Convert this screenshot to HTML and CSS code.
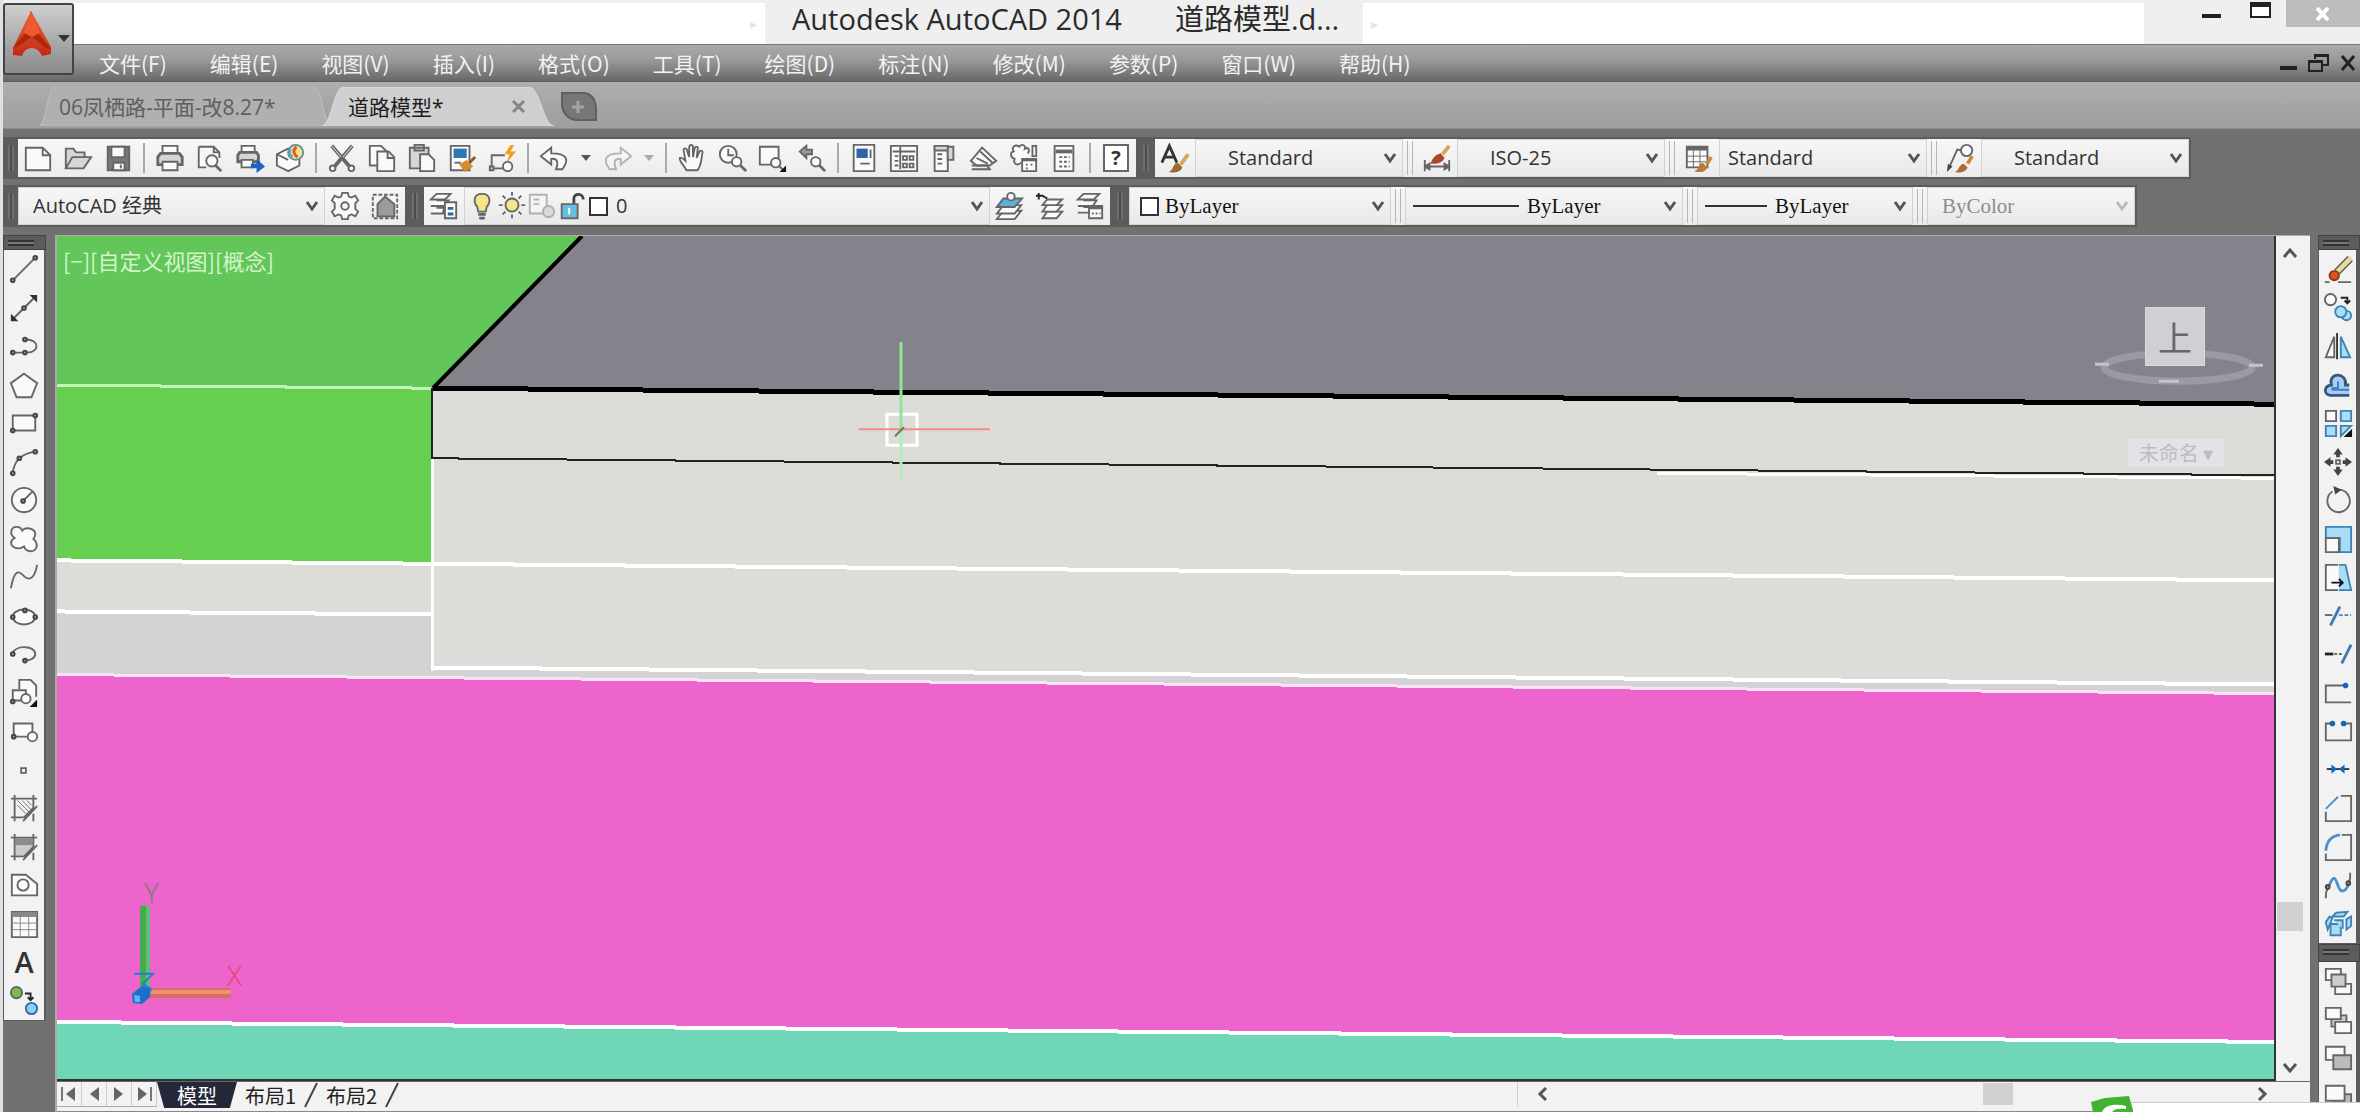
FILE: index.html
```html
<!DOCTYPE html>
<html lang="zh-CN">
<head>
<meta charset="utf-8">
<title>Autodesk AutoCAD 2014 道路模型.dwg</title>
<link rel="stylesheet" href="styles.css">
</head>
<body>
<div class="app">
  <header class="titlebar">
    <div class="title-pane"><span class="pane-arrow">▸</span></div>
    <h1 class="title"><span>Autodesk AutoCAD 2014</span><span>道路模型.d...</span></h1>
    <div class="title-pane"><span class="pane-arrow start">▸</span></div>
    <div class="window-buttons">
      <button type="button" aria-label="最小化"><svg width="20" height="20"><path d="M0 14h19v4H0z" fill="#222"/></svg></button>
      <button type="button" aria-label="最大化"><svg width="22" height="20"><path d="M1 4v13h19V4z" fill="#fff" stroke="#222" stroke-width="2"/><path d="M0 2h21v5H0z" fill="#222"/></svg></button>
      <button type="button" class="close" aria-label="关闭"><svg width="18" height="14"><path d="M3 1l11 12M14 1L3 13" stroke="#fff" stroke-width="4"/></svg></button>
    </div>
  </header>

  <nav class="menubar">
    <ul class="menus">
      <li><a href="#">文件(F)</a></li><li><a href="#">编辑(E)</a></li><li><a href="#">视图(V)</a></li><li><a href="#">插入(I)</a></li><li><a href="#">格式(O)</a></li><li><a href="#">工具(T)</a></li><li><a href="#">绘图(D)</a></li><li><a href="#">标注(N)</a></li><li><a href="#">修改(M)</a></li><li><a href="#">参数(P)</a></li><li><a href="#">窗口(W)</a></li><li><a href="#">帮助(H)</a></li>
    </ul>
    <div class="mdi-buttons">
      <button type="button" aria-label="最小化图形"><svg width="18" height="20"><path d="M0 13h17v4H0z" fill="#222"/></svg></button>
      <button type="button" aria-label="还原图形"><svg width="22" height="20"><path d="M7 6V2h13v10h-5M1 8h13v10H1z" fill="none" stroke="#222" stroke-width="2"/><path d="M6 1h15v3H6zM0 7h15v3H0z" fill="#222"/></svg></button>
      <button type="button" aria-label="关闭图形"><svg width="16" height="20"><path d="M2 3l12 14M14 3L2 17" stroke="#222" stroke-width="3"/></svg></button>
    </div>
  </nav>

  <button type="button" class="app-menu" aria-label="应用程序菜单">
    <svg width="70" height="70" viewBox="0 0 70 70">
      <defs><linearGradient id="red" x1="0" x2="0" y1="0" y2="1"><stop offset="0" stop-color="#f0643c"/><stop offset="1" stop-color="#c22a10"/></linearGradient></defs>
      <path d="M27 7L9 44v7l9 1c2-6 6-8 10-8s8 3 10 8l9-2v-7z" fill="url(#red)"/>
      <path d="M27 7l8 23 12 15-5-1-14-11-14 9-5 2 13-16z" fill="#9c1c0a" opacity=".7"/>
      <path d="M27 7l-7 22 8 4 8-4z" fill="#ee5a30"/>
      <path d="M54 31h12l-6 7z" fill="#333"/>
    </svg>
  </button>

  <div class="filetabs">
    <a href="#" class="filetab first"><svg class="shape" viewBox="0 0 290 40" preserveAspectRatio="none"><path d="M0 40C8 38 8 0 16 0H272C282 0 282 38 290 40z" fill="#b0b0b0" stroke="#bdbdbd"/></svg><span>06凤栖路-平面-改8.27*</span></a>
    <a href="#" class="filetab active"><svg class="shape" viewBox="0 0 240 40" preserveAspectRatio="none"><path d="M0 40C10 38 12 0 22 0H210C222 0 224 38 236 40z" fill="#cfcfcf" stroke="#dedede"/></svg><span>道路模型*</span><svg class="x" width="14" height="14"><path d="M1 1l11 11M12 1L1 12" stroke="#858585" stroke-width="3"/></svg></a>
    <button type="button" class="newtab" aria-label="新图形"><svg width="42" height="30"><path d="M4 1h23q10 2 11 15v12H18Q6 26 4 14z" fill="#777" stroke="#606060" stroke-width="2"/><path d="M20 9v12M14 15h12" stroke="#a5a5a5" stroke-width="3"/></svg></button>
  </div>

  <div class="toolrows">
    <div class="toolrow">
      <span class="grip"></span>
      <div class="bar">
        <button type="button" class="tool" aria-label="新建"><svg viewBox="0 0 32 32"><path class="w" d="M3 5h18l8 8v16H3z"/><path d="M21 5v8h8"/></svg></button>
        <button type="button" class="tool" aria-label="打开"><svg viewBox="0 0 32 32"><path class="g" d="M3 27V6h8l3 4h9v5M3 27l7-12h20l-8 12z"/></svg></button>
        <button type="button" class="tool" aria-label="保存"><svg viewBox="0 0 32 32"><path fill="#777" d="M5 4h23v25H5z"/><path class="w" d="M9 4h14v11H9zM11 21h12v8H11z"/><path d="M19 23v4"/></svg></button>
        <i class="sep"></i>
        <button type="button" class="tool" aria-label="打印"><svg viewBox="0 0 32 32"><path class="w" d="M8 12V3h16v9"/><path class="g" stroke-width="3" d="M6 11h20l3 4v8H3v-8z"/><path class="w" d="M8 20h16v9H8z"/></svg></button>
        <button type="button" class="tool" aria-label="打印预览"><svg viewBox="0 0 32 32"><path class="w" d="M4 4h16l6 6v6M4 4v22h8M20 4v6h6"/><circle class="w" cx="18" cy="19" r="6"/><path stroke-width="3" d="M22 24l6 6"/></svg></button>
        <button type="button" class="tool" aria-label="发布"><svg viewBox="0 0 32 32"><path class="w" d="M7 10V3h14v7"/><path class="g" stroke-width="3" d="M5 10h18l2 3v7H3v-7z"/><path class="w" d="M7 18h12v8H7z"/><path class="n" fill="#1d62c4" d="M17 22h6v-5l9 8-9 7v-5h-6z"/></svg></button>
        <button type="button" class="tool" aria-label="三维打印"><svg viewBox="0 0 32 32"><path class="w" d="M2 12l12-6 12 6v12l-12 6-12-6z"/><path d="M2 12l12 6"/><circle cx="22" cy="10" r="8" fill="#f4e487" stroke="#5f8f9c"/><path stroke="#e0552d" stroke-width="3" d="M23 4c-4 3-4 7 1 11"/><path stroke="#54a6d8" d="M17 6c-2 4-1 7 2 9"/></svg></button>
        <i class="sep"></i>
        <button type="button" class="tool" aria-label="剪切"><svg viewBox="0 0 32 32"><path stroke-width="4" d="M5 3l19 22M27 3L8 25"/><path stroke="#eee" stroke-width="1" d="M5 3l10 12M27 3L17 15"/><circle class="w" cx="6" cy="27" r="3"/><circle class="w" cx="26" cy="27" r="3"/></svg></button>
        <button type="button" class="tool" aria-label="复制"><svg viewBox="0 0 32 32"><path class="w" d="M3 3h12l5 5v16H3z"/><path class="w" d="M11 9h12l6 6v15H11zM22 9v7h7"/></svg></button>
        <button type="button" class="tool" aria-label="粘贴"><svg viewBox="0 0 32 32"><path class="g" d="M3 5h20v22H3zM8 2h10v6H8z"/><path class="w" d="M14 12h9l6 6v12H14z"/></svg></button>
        <button type="button" class="tool" aria-label="特性匹配"><svg viewBox="0 0 32 32"><path class="w" d="M4 3h20v26H4z"/><path class="n" fill="#2f76b8" d="M7 6h14v10H7z"/><path d="M8 21h7"/><path class="n" fill="#d98a30" d="M13 23l8-5 7 7-9 6z"/><path stroke="#8d5a24" stroke-width="3" d="M24 21l6-6"/></svg></button>
        <button type="button" class="tool" aria-label="块编辑器"><svg viewBox="0 0 32 32"><path d="M5 27V13h14M4 27h16"/><circle class="w" cx="22" cy="25" r="5"/><path class="g" d="M3 25h4v4H3z"/><path class="n" fill="#f39a1f" d="M25 2l-6 10h5l-3 9 10-12h-6l4-7z"/></svg></button>
        <i class="sep"></i>
        <button type="button" class="tool" aria-label="放弃"><svg viewBox="0 0 32 32"><path class="w" d="M13 5L2 14l11 9v-6c7-1 8 4 5 11h7c7-10 6-17-12-17z"/></svg></button>
        <button type="button" class="drop" aria-label="放弃列表"><svg width="10" height="8"><path d="M0 1h10L5 7z" fill="#555"/></svg></button>
        <button type="button" class="tool faint" aria-label="重做"><svg viewBox="0 0 32 32"><path class="w" d="M19 5l11 9-11 9v-6c-7-1-8 4-5 11H7C0 18 1 11 19 11z"/></svg></button>
        <button type="button" class="drop narrow" aria-label="重做列表"><svg width="10" height="8"><path d="M0 1h10L5 7z" fill="#aaa"/></svg></button>
        <i class="sep"></i>
        <button type="button" class="tool" aria-label="平移"><svg viewBox="0 0 32 32"><path class="w" d="M10 29c-2-5-8-9-7-13 3-1 5 2 6 3L7 7c2-3 4 0 4 2l2 6V4c1-3 4-2 4 0v11l2-10c2-2 4-1 3 2l-1 9 3-7c2-2 4 0 3 2-1 6-1 13-5 18z"/></svg></button>
        <button type="button" class="tool" aria-label="实时缩放"><svg viewBox="0 0 32 32"><circle class="w" cx="12" cy="12" r="9"/><path d="M12 6v7h6"/><circle class="w" cx="21" cy="20" r="5"/><path stroke-width="3" d="M25 24l6 6"/></svg></button>
        <button type="button" class="tool" aria-label="窗口缩放"><svg viewBox="0 0 32 32"><path class="w" d="M3 4h20v19H3z"/><circle class="w" cx="20" cy="21" r="5"/><path stroke-width="2" d="M23 24l4 4"/><path class="n" fill="#111" d="M31 24v7h-7z"/></svg></button>
        <button type="button" class="tool" aria-label="缩放上一个"><svg viewBox="0 0 32 32"><path fill="#999" d="M3 9l7-6v4h6v5h-6v4z"/><circle class="w" cx="20" cy="20" r="5"/><path stroke-width="3" d="M24 24l6 6"/></svg></button>
        <i class="sep"></i>
        <button type="button" class="tool" aria-label="特性"><svg viewBox="0 0 32 32"><path class="w" d="M5 2h22v28H5z"/><path class="n" fill="#2f62a8" d="M8 6h12v10H8z"/><path d="M23 7v9M12 22h10"/></svg></button>
        <button type="button" class="tool" aria-label="设计中心"><svg viewBox="0 0 32 32"><path class="w" d="M2 3h28v27H2z"/><path d="M12 4v24M4 9h24M15 14h4v4h-4zM22 14h4v4h-4zM15 22h4v4h-4zM22 22h4v4h-4zM6 14h4M6 19h4M6 24h4"/></svg></button>
        <button type="button" class="tool" aria-label="工具选项板"><svg viewBox="0 0 32 32"><path class="w" d="M6 3h14v27H6z"/><path class="g" d="M20 4h6v14h-6zM6 3h14v5H6z"/><path d="M9 12h5M9 17h5M9 22h5"/></svg></button>
        <button type="button" class="tool" aria-label="图纸集"><svg viewBox="0 0 32 32"><path class="w" d="M2 19L14 5l15 14-7 5H8z"/><path d="M8 16l12 6M12 9l13 12M3 24h16l4 5M3 28h18"/></svg></button>
        <button type="button" class="tool" aria-label="标记集"><svg viewBox="0 0 32 32"><path class="w" d="M13 21c-4 4-9 1-7-4-5-2-5-7-1-8-3-5 2-8 6-5 3-4 7-1 6 2 3-2 6 1 3 5"/><path class="w" d="M25 3h4v11h-4z"/><path class="w" d="M14 17h15v13H14z"/><path stroke-width="3" d="M14 18h15"/><path d="M18 23h2M23 23h2M18 27h2"/></svg></button>
        <button type="button" class="tool" aria-label="计算器"><svg viewBox="0 0 32 32"><path class="w" d="M6 3h20v27H6z"/><path stroke-width="4" d="M7 9h18"/><path stroke-dasharray="3 2" d="M11 15h11M11 20h11M11 25h11"/></svg></button>
        <i class="sep"></i>
        <button type="button" class="tool help" aria-label="帮助"><span>?</span></button>
      </div>
      <span class="grip wide"></span>
      <div class="bar">
        <button type="button" class="tool" aria-label="文字样式"><svg viewBox="0 0 32 32"><path stroke="#333" stroke-width="3" d="M2 21L10 3l8 18M5 15h10"/><path class="n" fill="#9a6a34" d="M9 31c6-2 4-9 10-10l5 5c-2 5-9 6-15 5z"/><path stroke="#d9a44a" stroke-width="4" d="M22 23l8-11"/></svg></button>
        <label class="combo w208 in33"><select aria-label="文字样式"><option>Standard</option></select><svg class="chev"><path d="M2 2l5 7 5-7"/></svg></label>
        <i class="dsep"></i>
        <button type="button" class="tool" aria-label="标注样式"><svg viewBox="0 0 32 32"><path d="M3 18v12M29 18v12M4 25h24M3 25l5-3v6zM29 25l-5-3v6z"/><path class="n" fill="#a8482e" d="M9 22c3-7 5-9 11-11l4 5c-2 5-8 7-15 6z"/><path stroke="#e0a060" stroke-width="4" d="M22 12l7-9"/></svg></button>
        <label class="combo w208 in33"><select aria-label="标注样式"><option>ISO-25</option></select><svg class="chev"><path d="M2 2l5 7 5-7"/></svg></label>
        <i class="dsep"></i>
        <button type="button" class="tool" aria-label="表格样式"><svg viewBox="0 0 32 32"><path class="w" d="M3 4h22v22H3z"/><path stroke-width="4" d="M3 6h22"/><path stroke-width="1" d="M10 8v18M17 8v18M3 14h22M3 20h22"/><path class="n" fill="#b87a34" d="M11 30c6-2 4-8 9-9l5 5c-2 5-8 6-14 4z"/><path stroke="#c98a3a" stroke-width="4" d="M24 23l5-8"/></svg></button>
        <label class="combo w208 in9"><select aria-label="表格样式"><option>Standard</option></select><svg class="chev"><path d="M2 2l5 7 5-7"/></svg></label>
        <i class="dsep"></i>
        <button type="button" class="tool" aria-label="多重引线样式"><svg viewBox="0 0 32 32"><circle class="w" cx="22" cy="8" r="6"/><path d="M3 27L12 7l5 1"/><path class="n" fill="#444" d="M1 31l1-9 5 3z"/><path class="n" fill="#b06a2c" d="M9 31c6-2 4-8 10-9l4 4c-2 5-8 6-14 5z"/><path stroke="#c98a3a" stroke-width="4" d="M23 22l5-8"/></svg></button>
        <label class="combo w208 in33"><select aria-label="多重引线样式"><option>Standard</option></select><svg class="chev"><path d="M2 2l5 7 5-7"/></svg></label>
      </div>
    </div>

    <div class="toolrow">
      <span class="grip"></span>
      <div class="bar">
        <label class="combo w306 in15"><select aria-label="工作空间"><option>AutoCAD 经典</option></select><svg class="chev"><path d="M2 2l5 7 5-7"/></svg></label>
        <button type="button" class="tool" aria-label="工作空间设置"><svg viewBox="0 0 32 32"><path class="w" d="M13 2h6l1 4 3 1 4-2 3 5-3 3v6l3 3-3 5-4-2-3 1-1 4h-6l-1-4-3-1-4 2-3-5 3-3v-6l-3-3 3-5 4 2 3-1z"/><circle cx="16" cy="16" r="4"/></svg></button>
        <button type="button" class="tool" aria-label="我的工作空间"><svg viewBox="0 0 32 32"><path stroke-dasharray="4 2" d="M3 4h26v25H3z"/><path fill="#9b9b9b" d="M8 14l8-8 10 8v13H8z"/></svg></button>
      </div>
      <span class="grip wide"></span>
      <div class="bar">
        <button type="button" class="tool" aria-label="图层特性管理器"><svg viewBox="0 0 32 32"><path class="w" d="M8 3h15l-6 6H2zM8 10h13l-4 6H2M8 18h8l-1 6H2"/><path class="w" d="M17 12h12v17H17z"/><path class="n" fill="#2a6aa8" d="M20 17h6v3h-6zM20 23h6v3h-6z"/></svg></button>
        <div class="combo w526 layer">
          <svg viewBox="0 0 28 32"><path d="M14 3c10 0 9 10 5 14l-1 5h-8l-1-5C5 13 4 3 14 3z" fill="#f6e587"/><path stroke-width="3" d="M10 25h8M11 29h6"/></svg>
          <svg viewBox="0 0 32 32"><circle cx="16" cy="15" r="7" fill="#f2e58c"/><path d="M16 1v4M16 25v4M2 15h4M26 15h4M6 5l3 3M26 5l-3 3M6 25l3-3M26 25l-3-3"/></svg>
          <svg viewBox="0 0 32 32" class="faint"><path class="w" d="M3 4h18v20H3zM7 9h6M7 14h6"/><circle cx="23" cy="22" r="6" fill="#c4c4c4"/></svg>
          <svg viewBox="0 0 30 32"><path stroke="#444" stroke-width="3" d="M17 14V8c0-6 10-6 10 1"/><path fill="#66bfe0" d="M4 14h17v15H4z"/><path stroke="#fff" d="M12 18v7"/></svg>
          <i class="swatch"></i>
          <select aria-label="图层"><option>0</option></select><svg class="chev"><path d="M2 2l5 7 5-7"/></svg>
        </div>
        <button type="button" class="tool" aria-label="将对象的图层置为当前"><svg viewBox="0 0 32 32"><path class="w" d="M9 21h19l-7 9H2z"/><path class="w" d="M9 15h19l-7 9H2z"/><path fill="#5db0de" d="M9 8h20l-8 9H2z"/><circle class="w" cx="17" cy="6" r="4"/></svg></button>
        <button type="button" class="tool" aria-label="上一个图层"><svg viewBox="0 0 32 32"><path class="w" d="M13 22h16l-6 7H8z"/><path class="w" d="M13 15h16l-6 7H8z"/><path class="w" d="M13 9h16l-6 6H8z"/><path stroke="#222" d="M4 2v7M1 5h7l5 3"/></svg></button>
        <button type="button" class="tool" aria-label="图层状态管理器"><svg viewBox="0 0 32 32"><path class="w" d="M9 3h17l-6 6H3zM9 10h14l-4 6H3M9 17h8l-2 6H3"/><path class="w" d="M15 16h14v13H15z"/><path stroke-width="3" d="M15 18h14"/><path stroke-dasharray="2 2" d="M18 24h9"/></svg></button>
      </div>
      <span class="grip wide"></span>
      <div class="bar serif">
        <div class="combo w262 color"><i class="swatch"></i><select aria-label="颜色"><option>ByLayer</option></select><svg class="chev"><path d="M2 2l5 7 5-7"/></svg></div>
        <i class="dsep"></i>
        <div class="combo w278 ltype"><i class="line"></i><select aria-label="线型"><option>ByLayer</option></select><svg class="chev"><path d="M2 2l5 7 5-7"/></svg></div>
        <i class="dsep"></i>
        <div class="combo w216 lweight"><i class="line"></i><select aria-label="线宽"><option>ByLayer</option></select><svg class="chev"><path d="M2 2l5 7 5-7"/></svg></div>
        <i class="dsep"></i>
        <div class="combo w208 plot"><select aria-label="打印样式" disabled><option>ByColor</option></select><svg class="chev"><path d="M2 2l5 7 5-7"/></svg></div>
      </div>
    </div>
  </div>

  <main class="workspace">
    <aside class="dock">
      <span class="dockgrip"></span>
      <div class="vbar">
        <button type="button" aria-label="直线"><svg viewBox="0 0 32 32"><path d="M5 27L27 5"/><circle class="d" cx="4" cy="28" r="2"/><circle class="d" cx="28" cy="4" r="2"/></svg></button>
        <button type="button" aria-label="构造线"><svg viewBox="0 0 32 32"><path d="M4 28L28 4"/><path class="n" fill="#333" d="M30 2v8l-8-8zM2 30v-8l8 8z"/><circle class="d" cx="16" cy="16" r="2"/></svg></button>
        <button type="button" aria-label="多段线"><svg viewBox="0 0 32 32"><path d="M4 23h15c14 0 14-14-1-14"/><circle class="d" cx="4" cy="23" r="2"/><circle class="d" cx="17" cy="23" r="2"/><circle class="d" cx="17" cy="9" r="2"/></svg></button>
        <button type="button" aria-label="多边形"><svg viewBox="0 0 32 32"><path class="w" d="M16 4l14 10-6 15H8L2 14z"/></svg></button>
        <button type="button" aria-label="矩形"><svg viewBox="0 0 32 32"><path class="w" d="M4 8h24v16H4z"/><circle class="d" cx="4" cy="24" r="2"/><circle class="d" cx="28" cy="8" r="2"/></svg></button>
        <button type="button" aria-label="圆弧"><svg viewBox="0 0 32 32"><path d="M4 28Q6 8 28 5"/><circle class="d" cx="4" cy="28" r="2"/><circle class="d" cx="11" cy="12" r="2"/><circle class="d" cx="28" cy="5" r="2"/></svg></button>
        <button type="button" aria-label="圆"><svg viewBox="0 0 32 32"><circle class="w" cx="16" cy="16" r="13"/><path d="M16 16l9-9"/><circle class="d" cx="15" cy="17" r="2"/></svg></button>
        <button type="button" aria-label="修订云线"><svg viewBox="0 0 32 32"><path class="w" d="M6 15C0 11 2 3 8 3c3 0 5 1 6 4 3-4 13-3 14 3 0 3-1 4-2 6 6 5 4 13-3 13-4 0-6-2-7-5-8 6-20-3-10-9z"/></svg></button>
        <button type="button" aria-label="样条曲线"><svg viewBox="0 0 32 32"><path d="M2 28C6 6 11 10 16 15s11 4 14-12"/></svg></button>
        <button type="button" aria-label="椭圆"><svg viewBox="0 0 32 32"><ellipse class="w" cx="16" cy="17" rx="12" ry="8"/><circle class="d" cx="4" cy="17" r="2"/><circle class="d" cx="28" cy="17" r="2"/><circle class="d" cx="17" cy="10" r="2"/></svg></button>
        <button type="button" aria-label="椭圆弧"><svg viewBox="0 0 32 32"><path d="M4 15c4-9 24-8 24 1 0 5-6 7-11 7"/><circle class="d" cx="4" cy="16" r="2"/><circle class="d" cx="17" cy="23" r="2"/></svg></button>
        <button type="button" aria-label="插入块"><svg viewBox="0 0 32 32"><path class="w" d="M11 12V2h12l6 6v12"/><path class="w" d="M4 24V13h14v11z"/><circle class="w" cx="18" cy="22" r="5"/><circle class="d" cx="4" cy="25" r="2"/><path class="n" fill="#111" d="M30 23v8h-8z"/></svg></button>
        <button type="button" aria-label="创建块"><svg viewBox="0 0 32 32"><path class="w" d="M5 22V8h20v14z"/><circle class="w" cx="25" cy="22" r="5"/><circle class="d" cx="5" cy="22" r="2"/></svg></button>
        <button type="button" aria-label="点"><svg viewBox="0 0 32 32"><path class="w" d="M13 14h5v5h-5z"/></svg></button>
        <button type="button" aria-label="图案填充"><svg viewBox="0 0 32 32"><path d="M6 2v28M2 6h28M26 2v14L16 26H2M30 14L15 30M26 22v8"/><path stroke-width="1" d="M9 8l12 12M14 8l10 10M9 13l9 9M19 8l5 5"/></svg></button>
        <button type="button" aria-label="渐变色"><svg viewBox="0 0 32 32"><path class="n" fill="#ccc" d="M7 7h18v10l-8 8H7z"/><path class="n" fill="#8c8c8c" d="M7 7h18v7H7z"/><path d="M6 2v28M2 6h28M26 2v14L16 26H2M30 14L15 30M26 22v8"/></svg></button>
        <button type="button" aria-label="面域"><svg viewBox="0 0 32 32"><path class="w" d="M3 5h15l12 10v12H3z"/><circle class="w" cx="15" cy="16" r="6"/></svg></button>
        <button type="button" aria-label="表格"><svg viewBox="0 0 32 32"><path class="w" d="M3 3h27v27H3z"/><path stroke="#888" stroke-width="5" d="M3 6h27"/><path stroke="#888" stroke-width="1" d="M12 8v22M21 8v22M3 15h27M3 22h27"/></svg></button>
        <button type="button" aria-label="多行文字" class="mtext">A</button>
        <button type="button" aria-label="添加选定对象"><svg viewBox="0 0 32 32"><circle cx="8" cy="7" r="6" fill="#7dbb4d"/><circle cx="24" cy="24" r="6" fill="#8fd0f2" stroke="#2d6ea8"/><path stroke="#222" d="M17 8h6v7M20 12l3 3 3-3"/></svg></button>
      </div>
    </aside>

    <section class="document">
      <div class="viewrow">
        <div class="viewport">
          <svg class="scene" viewBox="0 0 2219 844" preserveAspectRatio="none">
            <path fill="#dddcd8" d="M0 0h2219v844H0z"/>
            <path fill="#62c65a" d="M0 0h525L376 152 0 149z"/>
            <path fill="#66cf4f" d="M0 149l376 3v175L0 324z"/>
            <path fill="#84838c" d="M525 0h1694v168L376 152z"/>
            <path fill="#d3d3d6" d="M0 376l376 3v52l1843 17v8L0 438z"/>
            <path fill="#ec64cc" d="M0 438l2219 19v348L0 785z"/>
            <path fill="#70d6b8" d="M0 785l2219 20v39H0z"/>
            <g fill="none" shape-rendering="crispEdges">
              <path stroke="#c6f2b8" stroke-width="3" d="M0 149l376 3"/>
              <path stroke="#fff" stroke-width="4" d="M0 324l2219 20M0 375l376 3M376 431l1843 17M0 785l2219 20"/>
              <path stroke="#fbe3f4" stroke-width="3" d="M0 438l2219 19"/>
              <path stroke="#fff" stroke-width="3" d="M375 222v212M1600 237l619 5"/>
              <path stroke="#222" stroke-width="2" d="M375 152v70l1844 17"/>
              <path stroke="#000" stroke-width="5" d="M376 152l1843 16"/>
            </g>
            <path stroke="#000" stroke-width="4" d="M525 0L376 152"/>
            <path stroke="#333" stroke-width="2" d="M2218 0v844M0 843h2219"/>
            <g fill="none">
              <path stroke="#fff" stroke-width="3" d="M830 178h30v31h-30z"/>
              <path stroke="#8ee596" stroke-width="3" d="M844 106v90"/><path stroke="#b4ecb8" stroke-width="3" d="M844 196v46"/>
              <path stroke="#f58a86" stroke-width="2" d="M802 193h131"/>
              <path stroke="#667a66" stroke-width="2" d="M838 200l9-9"/>
            </g>
            <path fill="#44ad52" d="M83 669h10v84H83z"/><path fill="#62bd6c" d="M89 669h4v84h-4z"/>
            <path fill="#d8705f" d="M92 751h82v10H92z"/><path fill="#f08f78" d="M92 753h82v4H92z"/>
            <path fill="#1c6fd0" d="M75 757l10-8 9 3-1 8-8 7-9-1z"/><path stroke="#2a78d8" stroke-width="2" fill="none" d="M77 737h19L86 747l9 6"/><path fill="#62b6ee" d="M77 758l6 1v6h-5z"/>
            <ellipse cx="2121" cy="131" rx="74" ry="14" fill="none" stroke="#9b9aa2" stroke-width="7"/>
            <path stroke="#c4c4ca" stroke-width="3" d="M2038 128h14M2192 129h14M2102 145h20"/>
          </svg>
          <span class="view-label">[−][自定义视图][概念]</span>
          <button type="button" class="viewcube">上</button>
          <button type="button" class="ucs-name">未命名 ▾</button>
          <span class="axis y">Y</span><span class="axis x">X</span>
        </div>
        <div class="vscroll">
          <svg width="18" height="14"><path d="M3 11l6-7 6 7"/></svg>
          <i class="thumb"></i>
          <svg width="18" height="14"><path d="M3 3l6 7 6-7"/></svg>
        </div>
      </div>
      <div class="layoutrow">
        <button type="button" class="nav" aria-label="第一个"><svg width="20" height="16"><path d="M3 1v14" stroke="#777" stroke-width="2"/><path d="M16 1v14L7 8z" fill="#666"/></svg></button>
        <button type="button" class="nav" aria-label="上一个"><svg width="20" height="16"><path d="M15 1v14L6 8z" fill="#666"/></svg></button>
        <button type="button" class="nav" aria-label="下一个"><svg width="20" height="16"><path d="M5 1v14l9-7z" fill="#666"/></svg></button>
        <button type="button" class="nav" aria-label="最后一个"><svg width="20" height="16"><path d="M17 1v14" stroke="#777" stroke-width="2"/><path d="M4 1v14l9-7z" fill="#666"/></svg></button>
        <a href="#" class="layout current">模型</a>
        <a href="#" class="layout">布局1</a><svg class="slash" width="14" height="26"><path d="M1 25L13 1"/></svg>
        <a href="#" class="layout">布局2</a><svg class="slash" width="14" height="26"><path d="M1 25L13 1"/></svg>
        <div class="hscroll">
          <svg width="14" height="16"><path d="M10 2L4 8l6 6"/></svg>
          <i class="thumb"></i>
          <svg width="14" height="16"><path d="M4 2l6 6-6 6"/></svg>
        </div>
      </div>
    </section>

    <aside class="dock right">
      <span class="dockgrip"></span>
      <div class="vbar">
        <button type="button" aria-label="删除"><svg viewBox="0 0 32 32"><path d="M2 30h5M16 30h14"/><path stroke="#555" stroke-width="8" d="M15 19L29 5"/><path stroke="#ecd9a0" stroke-width="5" d="M15 19L30 4"/><circle cx="12" cy="23" r="5" fill="#d9541e" stroke="#8a3a1a"/></svg></button>
        <button type="button" aria-label="复制对象"><svg viewBox="0 0 32 32"><circle class="w" cx="8" cy="7" r="6"/><circle cx="25" cy="24" r="5" class="b"/><circle cx="19" cy="20" r="6" class="b"/><path stroke="#222" d="M19 5h7v6M23 8l3 3 3-3"/></svg></button>
        <button type="button" aria-label="镜像"><svg viewBox="0 0 32 32"><path class="w" d="M12 6v22H3z"/><path class="b" d="M19 6v22h10z"/><path d="M15 2v28" stroke="#333"/></svg></button>
        <button type="button" aria-label="偏移"><svg viewBox="0 0 32 32"><path fill="#a9cdf0" stroke="#35597c" stroke-width="3" d="M28 27H8c-8-1-7-10 1-11C5 2 26 2 24 16h4"/><path stroke="#3d7fd0" d="M28 21H11c-2 0-2-2 1-2h4v-7"/></svg></button>
        <button type="button" aria-label="阵列"><svg viewBox="0 0 32 32"><path class="w" d="M3 3h11v11H3z"/><path class="b" d="M19 3h11v11H19zM3 19h11v11H3zM19 30V19h11z"/><path class="n" fill="#111" d="M31 22v9h-9z"/></svg></button>
        <button type="button" aria-label="移动"><svg viewBox="0 0 32 32"><path class="n" fill="#444" d="M16 1l5 7h-3v3h-4V8h-3zM16 31l5-7h-3v-3h-4v3h-3zM1 16l7-5v3h3v4H8v3zM31 16l-7-5v3h-3v4h3v3z"/><path class="w" d="M14 14h4v4h-4z"/></svg></button>
        <button type="button" aria-label="旋转"><svg viewBox="0 0 32 32"><path d="M17 5a12 12 0 1 1-7 2"/><path class="n" fill="#444" d="M11 1l9 4-7 5z"/></svg></button>
        <button type="button" aria-label="缩放"><svg viewBox="0 0 32 32"><path class="b" d="M3 3h27v27H18V15H3z"/><path class="w" d="M3 15h14v15H3z"/></svg></button>
        <button type="button" aria-label="拉伸"><svg viewBox="0 0 32 32"><path class="w" d="M16 3H3v27h13"/><path class="b" d="M17 3h7l6 27H17"/><path stroke="#111" d="M9 22h12M17 18l4 4-4 4"/></svg></button>
        <button type="button" aria-label="修剪"><svg viewBox="0 0 32 32"><path stroke="#3c78b8" stroke-width="3" d="M18 6L8 26"/><path d="M2 15h8"/><path stroke-dasharray="4 2" stroke="#4a84b8" d="M17 15h13"/></svg></button>
        <button type="button" aria-label="延伸"><svg viewBox="0 0 32 32"><path stroke="#3c78b8" stroke-width="3" d="M30 6L20 26"/><path stroke="#222" stroke-width="3" d="M2 16h9"/><path stroke-dasharray="3 2" d="M12 16h10"/></svg></button>
        <button type="button" aria-label="打断于点"><svg viewBox="0 0 32 32"><path d="M24 8H3v18h27"/><circle cx="24" cy="8" r="3" class="k"/></svg></button>
        <button type="button" aria-label="打断"><svg viewBox="0 0 32 32"><path d="M9 8H3v18h27V8h-7"/><circle cx="10" cy="8" r="3" class="k"/><circle cx="22" cy="8" r="3" class="k"/></svg></button>
        <button type="button" aria-label="合并"><svg viewBox="0 0 32 32"><path stroke="#333" d="M4 15h24"/><path class="k" d="M9 10l6 5-6 5zM23 10l-6 5 6 5z"/></svg></button>
        <button type="button" aria-label="倒角"><svg viewBox="0 0 32 32"><path d="M19 3h11v27H3V20"/><path stroke="#4a90d0" d="M3 17L16 4"/></svg></button>
        <button type="button" aria-label="圆角"><svg viewBox="0 0 32 32"><path d="M20 3h10v27H3v-7"/><path stroke="#4a90d0" stroke-width="3" d="M3 20Q4 5 18 3"/></svg></button>
        <button type="button" aria-label="光顺曲线"><svg viewBox="0 0 32 32"><path d="M3 30c0-6 0-8 4-13M29 3c0 7 0 8-3 12"/><path stroke="#4a90d0" stroke-width="3" d="M6 18c7-18 8-5 11 1s8 3 10-4"/><circle class="d" cx="5" cy="18" r="2"/><circle class="d" cx="27" cy="14" r="2"/></svg></button>
        <button type="button" aria-label="分解"><svg viewBox="0 0 32 32"><path class="b" d="M14 4l12-1-4 5H10zM8 16h11v12H8z"/><path class="b" d="M25 11l5-3v10l-5 4zM3 14l4-6 3 2-5 12z"/><path class="b" d="M12 12h9v9"/></svg></button>
      </div>
      <span class="dockgrip second"></span>
      <div class="vbar order">
        <button type="button" aria-label="前置"><svg viewBox="0 0 32 32"><path class="w" d="M3 3h16v12H3zM13 19h17v11H13z"/><path fill="#ccc" d="M9 9h15v13H9z"/></svg></button>
        <button type="button" aria-label="后置"><svg viewBox="0 0 32 32"><path fill="#ccc" d="M9 11h16v12H9z"/><path class="w" d="M3 3h16v12H3zM13 18h17v12H13z"/></svg></button>
        <button type="button" aria-label="置于对象之上"><svg viewBox="0 0 32 32"><path class="w" d="M3 4h20v14H3z"/><path fill="#bbb" d="M11 13h19v15H11z"/></svg></button>
        <button type="button" aria-label="置于对象之下"><svg viewBox="0 0 32 32"><path fill="#bbb" d="M11 13h19v15H11z"/><path class="w" d="M3 4h20v16H3z"/></svg></button>
      </div>
    </aside>
  </main>
  <div class="ime"><svg width="46" height="16"><path d="M1 6l14-4 24-2 4 14v2H3z" fill="#3eb52c"/><path d="M12 16c2-7 14-9 24-6v3c-8-1-12 0-14 3z" fill="#fff"/></svg></div>
</div>
</body>
</html>
```
FILE: styles.css
```css
* { box-sizing: border-box; }
body { margin: 0; background: #717171; font-family: "Open Sans", "Noto Sans", "Noto Sans CJK SC", sans-serif; color: #333; }
button { border: 0; padding: 0; margin: 0; background: none; font: inherit; color: inherit; display: flex; align-items: center; justify-content: center; }
a { color: inherit; text-decoration: none; }
i { display: block; flex: none; }
svg { flex: none; display: block; }

.app { position: relative; height: 100vh; display: flex; flex-direction: column; overflow: hidden; border-left: 3px solid #dfe0e4; }

/* title bar */
.titlebar { flex: none; height: 45px; display: grid; grid-template-columns: 762fr 598px 781fr 216px; background: #efefef; border-bottom: 1px solid #777; }
.title-pane { background: #fff; margin-top: 3px; padding: 0 8px; display: flex; align-items: center; justify-content: flex-end; }
.pane-arrow { font-size: 14px; color: #e4e4e4; }
.pane-arrow.start { margin-right: auto; }
.title { margin: 0; padding-left: 27px; display: flex; gap: 53px; font-size: 29px; font-weight: 400; line-height: 38px; color: #2b2b2b; white-space: nowrap; }
.window-buttons { display: flex; align-items: flex-start; gap: 28px; padding-left: 58px; }
.window-buttons button { flex: none; }
.window-buttons .close { flex: 1; height: 27px; margin-left: -14px; background: #bcbcbc; }

/* menu bar */
.menubar { flex: none; height: 37px; display: flex; align-items: center; justify-content: space-between; padding: 0 4px 0 75px; background: linear-gradient(#aaa, #9a9a9a 40%, #686868); border-bottom: 1px solid #5c5c5c; }
.menus { display: flex; margin: 0; padding: 0; list-style: none; font-family: "Noto Sans CJK SC", sans-serif; font-size: 21px; line-height: 30px; color: #f2f2f2; }
.menus a { display: block; padding: 0 22px 0 21px; }
.mdi-buttons { display: flex; gap: 10px; }
.app-menu { position: absolute; left: 0; top: 3px; width: 71px; height: 72px; border: 2px solid #444; border-radius: 3px; background: linear-gradient(#d0d0d0, #a4a4a4 60%, #8c8c8c); }

/* drawing file tabs */
.filetabs { flex: none; height: 47px; display: flex; align-items: flex-end; padding: 0 0 2px 36px; background: linear-gradient(#aeaeae, #9e9e9e); border-bottom: 1px solid #8b8b8b; font: 21px/30px "Open Sans", "Noto Sans CJK SC", sans-serif; }
.filetab { position: relative; height: 39px; display: flex; align-items: center; }
.filetab span { position: relative; }
.filetab.first { width: 292px; padding-left: 20px; color: #5e5e5e; }
.filetab.active { width: 236px; margin-left: -9px; padding-left: 26px; color: #1d1d1d; }
.filetab .shape { position: absolute; left: 0; top: 0; width: 100%; height: 100%; }
.filetab .x { position: relative; margin-left: auto; margin-right: 32px; }
.newtab { height: 39px; padding-left: 0; }

/* horizontal toolbars */
.toolrows { flex: none; display: flex; flex-direction: column; gap: 10px; padding: 10px 0; }
.toolrow { display: flex; height: 38px; box-shadow: 0 0 0 2px #5c5c5c; width: max-content; }
.grip { flex: none; width: 15px; background: repeating-linear-gradient(90deg, #6f6f6f 0 2px, #4d4d4d 2px 4px) center / 6px 26px no-repeat #5c5c5c; }
.grip.wide { width: 19px; }
.bar { display: flex; align-items: stretch; background: linear-gradient(#f7f7f7, #ececec); }
.tool { width: 40px; flex: none; }
.tool svg, .vbar svg, .layer > svg:not(.chev) { width: 30px; height: 30px; fill: none; stroke: #666; stroke-width: 2; }
.drop { width: 24px; }
.drop.narrow { width: 22px; }
.faint { opacity: .45; }
.w { fill: #fafafa; }
.g { fill: #d6d6d6; }
.d { fill: #999; stroke: #444; }
.b { fill: #a9dcf5; stroke: #3f83b5; }
.k { fill: #1565b8; stroke: none; }
.n { stroke: none; }
.help span { width: 26px; height: 28px; border: 2px solid #666; background: #fff; font-size: 20px; font-weight: 700; line-height: 24px; }
.sep { width: 2px; margin: 4px 5px; background: #aaa; }
.dsep { width: 6px; margin: 2px 4px; border: 1px solid #b5b5b5; border-width: 0 1px; }
.combo { position: relative; flex: none; display: flex; align-items: center; border: 1px solid #d2d2d2; background: linear-gradient(#f6f6f6, #e9e9e9); }
select { appearance: none; flex: 1; min-width: 0; height: 36px; border: 0; padding: 0; margin: 0; background: none; font: 20px/28px "Open Sans", "Noto Sans CJK SC", sans-serif; color: #333; opacity: 1; }
.chev { position: absolute; right: 5px; top: 12px; width: 14px; height: 12px; fill: none; stroke: #555; stroke-width: 3; pointer-events: none; }
.w208 { width: 208px; }
.w306 { width: 307px; }
.w526 { width: 526px; }
.w262 { width: 262px; }
.w278 { width: 278px; }
.w216 { width: 216px; }
.in33 { padding-left: 32px; }
.in15 { padding-left: 14px; }
.in9 { padding-left: 8px; }
.swatch { width: 19px; height: 19px; border: 2px solid #333; background: #fff; }
.layer { padding-left: 2px; }
.layer select { margin-left: 8px; }
.layer .swatch { margin-left: 2px; }
.serif select { font-family: "Liberation Serif", serif; font-size: 21px; color: #111; }
.color { padding-left: 10px; gap: 6px; }
.line { height: 2px; background: #333; }
.ltype, .lweight { padding-left: 7px; gap: 8px; }
.ltype .line { width: 106px; }
.lweight .line { width: 62px; }
.plot { padding-left: 14px; }
.serif .plot select { color: #8c8c8c; }
.plot .chev { stroke: #bbb; }

/* workspace */
.workspace { flex: 1; min-height: 0; display: flex; overflow: hidden; }
.dock { flex: none; width: 43px; margin-right: 9px; }
.dockgrip { display: block; height: 15px; border: 1px solid #444; background: repeating-linear-gradient(#333 0 2px, #777 2px 4px) 4px 4px / 26px 6px no-repeat #5c5c5c; }
.dockgrip.second { height: 18px; }
.vbar { display: grid; grid-auto-rows: 38px 39px; background: #f2f2f2; border: solid #5c5c5c; border-width: 0 2px 1px 1px; }
.mtext { font-size: 29px; line-height: 38px; color: #333; font-weight: 600; }
.dock.right { width: 42px; margin: 0 0 0 8px; }
.right .vbar { border-right-width: 4px; }

.document { flex: 1; min-width: 0; display: flex; flex-direction: column; border: solid #aaa; border-width: 1px 0 0 2px; }
.viewrow { flex: 1; min-height: 0; display: flex; }
.viewport { position: relative; flex: 1; min-width: 0; overflow: hidden; }
.scene { position: absolute; width: 100%; height: 100%; }
.view-label { position: absolute; left: 6px; top: 8px; font: 22px/32px "Noto Sans CJK SC", sans-serif; color: #d3f5c8; white-space: nowrap; }
.viewcube { position: absolute; right: 71px; top: 71px; width: 60px; height: 59px; background: #cfcfd5; border: 1px solid #dcdce0; color: #66666e; font: 34px/50px "Noto Sans CJK SC", sans-serif; }
.ucs-name { position: absolute; right: 52px; top: 203px; width: 96px; height: 28px; background: #e3e3e6; color: #bcbcc6; font: 20px/28px "Noto Sans CJK SC", sans-serif; }
.axis { position: absolute; font: 28px/32px "Open Sans", sans-serif; font-weight: 300; }
.axis.y { left: 87px; bottom: 173px; color: #7d7a76; }
.axis.x { left: 170px; bottom: 90px; color: #f0426a; }
.vscroll { flex: none; width: 34px; padding: 10px 6px 6px 0; display: flex; flex-direction: column; align-items: center; background: #f2f2f2; }
.vscroll svg, .hscroll svg { fill: none; stroke: #555; stroke-width: 3; }
.vscroll .thumb { width: 26px; height: 29px; margin-top: auto; margin-bottom: 130px; background: #d0d0d0; }

.layoutrow { flex: none; height: 31px; display: flex; align-items: flex-start; background: #f2f2f2; border-top: 1px solid #666; border-bottom: 1px solid #888; }
.nav { width: 25px; height: 25px; border-right: 1px solid #ccc; border-bottom: 1px solid #aaa; }
.layout { font: 20px/28px "Noto Sans CJK SC", sans-serif; color: #222; padding: 0 8px; height: 26px; }
.layout.current { width: 80px; padding: 0 20px; color: #fff; background: #242838; clip-path: polygon(0 0, 100% 0, 91% 100%, 9% 100%); }
.slash { stroke: #444; stroke-width: 2; }
.hscroll { width: 758px; height: 24px; margin-left: auto; margin-right: 35px; padding: 0 6px 0 18px; display: flex; align-items: center; border-left: 1px solid #ccc; }
.hscroll .thumb { width: 30px; height: 22px; margin-left: auto; margin-right: 242px; background: #d0d0d0; }

/* input-method bar resting on the lower edge */
.ime { position: absolute; right: 0; bottom: 0; width: 265px; height: 10px; background: #fff; border-top: 1px solid #ccc; }
.ime svg { position: absolute; left: -5px; bottom: 0; }
```
